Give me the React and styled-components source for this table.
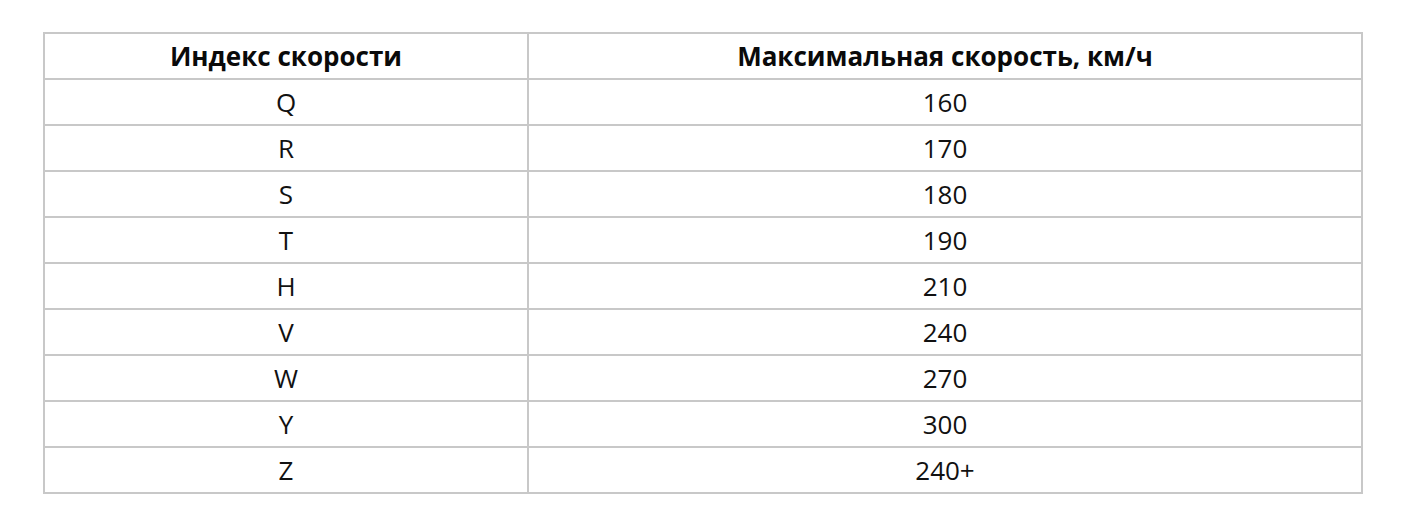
import React from 'react'
import styled, { createGlobalStyle } from 'styled-components'

const GlobalStyle = createGlobalStyle`
	html, body {
		margin: 0;
		padding: 0;
		background: #fff;
	}
	body {
		font-family: 'Open Sans', 'Noto Sans', sans-serif;
		color: #111;
	}
`

const Page = styled.div`
	padding: 32px 43px 0 43px;
`

const Table = styled.table`
	width: 1320px;
	border-collapse: collapse;
	border: 2px solid #c8c8c8;
	table-layout: fixed;
`

const HeadCell = styled.th`
	height: 44px;
	padding: 0;
	border: 2px solid #c8c8c8;
	font-size: 26px;
	line-height: 30px;
	font-weight: 700;
	text-align: center;
	color: #0a0a0a;
	width: ${props => props.width || 'auto'};
`

const Cell = styled.td`
	height: 44px;
	padding: 0;
	border: 2px solid #c8c8c8;
	font-size: 26px;
	line-height: 30px;
	font-weight: 400;
	text-align: center;
	color: #111;
`

const speeds = [
	['Q', '160'],
	['R', '170'],
	['S', '180'],
	['T', '190'],
	['H', '210'],
	['V', '240'],
	['W', '270'],
	['Y', '300'],
	['Z', '240+'],
]

export default function App() {
	return (
		<Page>
			<GlobalStyle />
			<Table>
				<thead>
					<tr>
						<HeadCell width="482px">Индекс скорости</HeadCell>
						<HeadCell>Максимальная скорость, км/ч</HeadCell>
					</tr>
				</thead>
				<tbody>
					{speeds.map(([index, speed]) => (
						<tr key={index}>
							<Cell>{index}</Cell>
							<Cell>{speed}</Cell>
						</tr>
					))}
				</tbody>
			</Table>
		</Page>
	)
}
